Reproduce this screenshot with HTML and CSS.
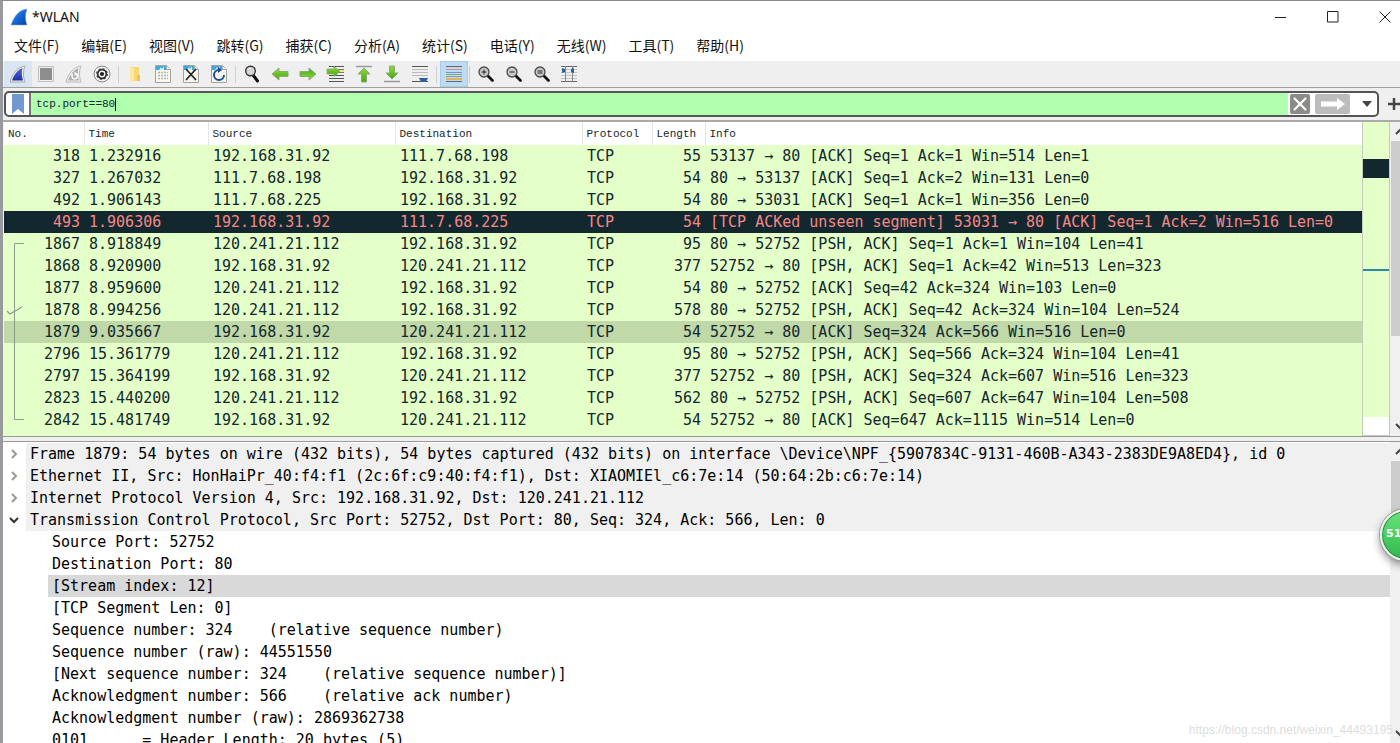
FILE: index.html
```html
<!DOCTYPE html>
<html lang="zh-CN">
<head>
<meta charset="utf-8">
<title>*WLAN</title>
<link rel="stylesheet" href="styles.css">
</head>
<body>
<svg class="defs" aria-hidden="true">
  <defs>
    <linearGradient id="blueFin" x1="0" y1="0" x2="1" y2="1"><stop offset="0" stop-color="#49a2ef"/><stop offset="0.5" stop-color="#1568d8"/><stop offset="1" stop-color="#0a3f9e"/></linearGradient>
    <linearGradient id="darkFin" x1="0" y1="0" x2="0" y2="1"><stop offset="0" stop-color="#5068d8"/><stop offset="1" stop-color="#1c2fa8"/></linearGradient>
    <linearGradient id="green" x1="0" y1="0" x2="0" y2="1"><stop offset="0" stop-color="#8bdc3c"/><stop offset="1" stop-color="#45a80c"/></linearGradient>
    <symbol id="page" viewBox="0 0 18 20"><path d="M1.500 1.500h11l4 4v13h-15z" fill="#f6f6f0" stroke="#a3a59b"/><path d="M2 2h10l4 4H2z" fill="#40a6dd"/><path d="M5 6l2-3 1 2 2-3v4z" fill="#d8effa"/><path d="M12.500 1.500v4h4z" fill="#fff" stroke="#a3a59b" stroke-width=".7"/></symbol>
    <symbol id="lens" viewBox="0 0 18 18"><path d="M11 11l4.500 4.500" stroke="#111" stroke-width="2.800" stroke-linecap="round"/><circle cx="7" cy="7" r="5" fill="#c9c9c9" stroke="#4a4a4a" stroke-width="1.300"/></symbol>
    <symbol id="arrow" viewBox="0 0 18 14"><path d="M1 7l7-6v3.500h9v5H8V13z" fill="url(#green)" stroke="#90a77e" stroke-width="1"/></symbol>
  </defs>
</svg>
<div class="window">
  <header class="titlebar">
    <svg class="logo" viewBox="0 0 18 18"><path d="M1 17C4 9 8 2 17 1c-2 5-2 11 0 16z" fill="url(#blueFin)" stroke="#7fa7d6" stroke-width=".6"/></svg>
    <h1 class="title">*WLAN</h1>
    <div class="window-buttons">
      <button aria-label="Minimize"><svg viewBox="0 0 12 12"><path d="M0 6.500h11" stroke="#222"/></svg></button>
      <button aria-label="Maximize"><svg viewBox="0 0 12 12"><path d="M.5 .5h10.500v10.500H.5z" fill="none" stroke="#222"/></svg></button>
      <button aria-label="Close"><svg viewBox="0 0 12 12"><path d="M.5 .5l11 11M11.500 .5l-11 11" stroke="#222"/></svg></button>
    </div>
  </header>
  <nav class="menu">
    <button>文件(F)</button><button>编辑(E)</button><button>视图(V)</button><button>跳转(G)</button><button>捕获(C)</button><button>分析(A)</button><button>统计(S)</button><button>电话(Y)</button><button>无线(W)</button><button>工具(T)</button><button>帮助(H)</button>
  </nav>
  <div class="toolbar" role="toolbar">
    <button class="start" aria-label="Start"><svg viewBox="0 0 20 20"><path d="M2 18C4 10 9 3 17 2c-2 5-2 11 0 16z" fill="#eee" stroke="#aaa"/><path d="M4 16.500C6 11 9 6 14.500 4c-1 4-1 8 .5 12.500z" fill="url(#darkFin)"/></svg></button>
    <button aria-label="Stop"><svg viewBox="0 0 20 20"><path d="M2.500 2.500h15v15h-15z" fill="#eee" stroke="#c0c0c0"/><path d="M4 4h12v12H4z" fill="#8d8d8d"/></svg></button>
    <button aria-label="Restart"><svg viewBox="0 0 20 20"><path d="M2 18C4 10 9 3 17 2c-2 5-2 11 0 16z" fill="#eee" stroke="#bbb"/><path d="M4 16.500C6 11 9 6 14.500 4c-1 4-1 8 .5 12.500z" fill="#b0b0b0"/><path d="M8 9.500v2a2.800 2.800 0 1 0 5-1" fill="none" stroke="#fff" stroke-width="1.500"/><path d="M10.500 7.500l3.500 3-3.500 1z" fill="#fff"/></svg></button>
    <button aria-label="Options"><svg viewBox="0 0 20 20"><circle cx="10" cy="10" r="8" fill="#f4f4f4" stroke="#888"/><circle cx="10" cy="10" r="4.300" fill="#f4f4f4" stroke="#333" stroke-width="1.700"/><circle cx="10" cy="10" r="5.300" fill="none" stroke="#333" stroke-width="1.200" stroke-dasharray="2.100 2.060"/><circle cx="10" cy="10" r="2.100" fill="#222"/></svg></button>
    <span class="sep"></span>
    <button aria-label="Open"><svg viewBox="0 0 20 20"><path d="M5 3h9v14H5z" fill="#f8d775"/><path d="M5 3l4 1v14l-4-1z" fill="#fbe7a5"/><path d="M12 11h3v6h-3z" fill="#efc35a"/></svg></button>
    <button aria-label="Save"><svg viewBox="0 0 20 20"><use href="#page" x="1" width="18" height="20"/><path d="M5 8.500h10M5 11.500h10M5 14.500h10" stroke="#b3b6ac" stroke-width="1.500" stroke-dasharray="2 1"/></svg></button>
    <button aria-label="Close file"><svg viewBox="0 0 20 20"><use href="#page" x="1" width="18" height="20"/><path d="M5 5l10 11M15 5L5 16" stroke="#222" stroke-width="1.700"/></svg></button>
    <button aria-label="Reload"><svg viewBox="0 0 20 20"><use href="#page" x="1" width="18" height="20"/><path d="M10 6a5 5 0 1 0 5 5" fill="none" stroke="#244c8c" stroke-width="2"/><path d="M9 3l4 3-4 3z" fill="#244c8c"/></svg></button>
    <span class="sep"></span>
    <button aria-label="Find"><svg viewBox="0 0 20 20"><path d="M11 11l4.500 6" stroke="#111" stroke-width="3" stroke-linecap="round"/><circle cx="8.500" cy="7" r="4.800" fill="#d5d5d5" stroke="#333" stroke-width="1.400"/><path d="M6 6q1-2 3-2" stroke="#fff" fill="none"/></svg></button>
    <button aria-label="Back"><svg viewBox="0 0 20 20"><use href="#arrow" x="1" y="3" width="18" height="14"/></svg></button>
    <button aria-label="Forward"><svg viewBox="0 0 20 20"><g transform="rotate(180 10 10)"><use href="#arrow" x="1" y="3" width="18" height="14"/></g></svg></button>
    <button aria-label="Go to packet"><svg viewBox="0 0 20 20"><path d="M3 2.500h15M3 11.500h15M3 14.500h15M3 17.500h15" stroke="#555"/><path d="M12 5h6v4h-6z" fill="#f4e36d"/><path d="M12 5.500h6M12 8.500h6" stroke="#777"/><path d="M14 7.500L8 2.500V5H1v5h7v2.500z" fill="url(#green)" stroke="#8ba577" stroke-width=".8"/></svg></button>
    <button aria-label="First packet"><svg viewBox="0 0 20 20"><path d="M2 2.500h16" stroke="#999" stroke-width="1.500"/><path d="M10 4l6 6h-3.500v8h-5v-8H4z" fill="url(#green)" stroke="#90a77e"/></svg></button>
    <button aria-label="Last packet"><svg viewBox="0 0 20 20"><path d="M2 17.500h16" stroke="#999" stroke-width="1.500"/><path d="M10 15l6-6h-3.500V2h-5v7H4z" fill="url(#green)" stroke="#90a77e"/></svg></button>
    <button aria-label="Auto scroll"><svg viewBox="0 0 20 20"><path d="M2 2.500h16M2 17.500h16" stroke="#555"/><path d="M2 5.500h16M2 8.500h16M2 11.500h16" stroke="#bbb"/><path d="M9 14h9l-2 4h-5z" fill="#315da8"/></svg></button>
    <span class="sep wide"></span>
    <button class="checked" aria-label="Colorize"><svg viewBox="0 0 20 20"><path d="M2 2.500h16M2 17.500h16" stroke="#666"/><path d="M2 5.500h16" stroke="#dc8988"/><path d="M2 8.500h16" stroke="#7d91ce"/><path d="M2 10.500h16" stroke="#78b667"/><path d="M2 12.500h16" stroke="#a48bb9"/><path d="M2 15h16" stroke="#d6b958" stroke-width="2"/></svg></button>
    <span class="sep tight"></span>
    <button aria-label="Zoom in"><svg viewBox="0 0 20 20"><use href="#lens" x="2" y="1" width="18" height="18"/><path d="M6.500 8h5M9 5.500v5" stroke="#222"/></svg></button>
    <button aria-label="Zoom out"><svg viewBox="0 0 20 20"><use href="#lens" x="2" y="1" width="18" height="18"/><path d="M6.500 8h5" stroke="#222"/></svg></button>
    <button aria-label="Normal size"><svg viewBox="0 0 20 20"><use href="#lens" x="2" y="1" width="18" height="18"/><path d="M6.500 7h5M6.500 9h5" stroke="#222"/></svg></button>
    <button aria-label="Resize columns"><svg viewBox="0 0 20 20"><path d="M2 2.500h16M2 17.500h16" stroke="#666"/><path d="M2 5.500h16M2 8.500h16M2 11.500h16M2 14.500h16" stroke="#c4c4c4"/><path d="M6.500 2v16M13.500 2v16" stroke="#888"/><path d="M3 4l3 1v3l-3 1zM15 4l-3 1v3l3 1z" fill="#315d9a"/></svg></button>
  </div>
  <div class="filterbar">
    <div class="filter">
      <button class="bookmark" aria-label="Bookmarks"><svg viewBox="0 0 12 20"><path d="M0 0h12v20l-6-5-6 5z" fill="#6f9ad0"/></svg></button>
      <div class="field-wrap"><input type="text" value="tcp.port==80" aria-label="Display filter"></div>
      <button class="clear" aria-label="Clear"><svg viewBox="0 0 20 20"><path d="M4 4l12 12M16 4L4 16" stroke="#fff" stroke-width="2.200"/></svg></button>
      <button class="apply" aria-label="Apply"><svg viewBox="0 0 35 20"><path d="M6 7.500h16V4l8 6-8 6v-3.500H6z" fill="#fff"/></svg></button>
      <button class="drop" aria-label="Recent filters"><svg viewBox="0 0 10 6"><path d="M0 0h10L5 6z" fill="#444"/></svg></button>
    </div>
    <button class="add" aria-label="Add filter button"><svg viewBox="0 0 12 12"><path d="M6 0v12M0 6h12" stroke="#444" stroke-width="2.500"/></svg></button>
  </div>
  <section class="packets">
    <div class="list">
      <table>
        <colgroup><col class="c-no"><col class="c-time"><col class="c-addr"><col class="c-addr"><col class="c-proto"><col class="c-len"><col></colgroup>
        <thead><tr><th>No.</th><th>Time</th><th>Source</th><th>Destination</th><th>Protocol</th><th>Length</th><th>Info</th></tr></thead>
        <tbody>
          <tr><td>318</td><td>1.232916</td><td>192.168.31.92</td><td>111.7.68.198</td><td>TCP</td><td>55</td><td>53137 → 80 [ACK] Seq=1 Ack=1 Win=514 Len=1</td></tr>
          <tr><td>327</td><td>1.267032</td><td>111.7.68.198</td><td>192.168.31.92</td><td>TCP</td><td>54</td><td>80 → 53137 [ACK] Seq=1 Ack=2 Win=131 Len=0</td></tr>
          <tr><td>492</td><td>1.906143</td><td>111.7.68.225</td><td>192.168.31.92</td><td>TCP</td><td>54</td><td>80 → 53031 [ACK] Seq=1 Ack=1 Win=356 Len=0</td></tr>
          <tr class="bad"><td>493</td><td>1.906306</td><td>192.168.31.92</td><td>111.7.68.225</td><td>TCP</td><td>54</td><td>[TCP ACKed unseen segment] 53031 → 80 [ACK] Seq=1 Ack=2 Win=516 Len=0</td></tr>
          <tr><td>1867</td><td>8.918849</td><td>120.241.21.112</td><td>192.168.31.92</td><td>TCP</td><td>95</td><td>80 → 52752 [PSH, ACK] Seq=1 Ack=1 Win=104 Len=41</td></tr>
          <tr><td>1868</td><td>8.920900</td><td>192.168.31.92</td><td>120.241.21.112</td><td>TCP</td><td>377</td><td>52752 → 80 [PSH, ACK] Seq=1 Ack=42 Win=513 Len=323</td></tr>
          <tr><td>1877</td><td>8.959600</td><td>120.241.21.112</td><td>192.168.31.92</td><td>TCP</td><td>54</td><td>80 → 52752 [ACK] Seq=42 Ack=324 Win=103 Len=0</td></tr>
          <tr><td>1878</td><td>8.994256</td><td>120.241.21.112</td><td>192.168.31.92</td><td>TCP</td><td>578</td><td>80 → 52752 [PSH, ACK] Seq=42 Ack=324 Win=104 Len=524</td></tr>
          <tr class="selected"><td>1879</td><td>9.035667</td><td>192.168.31.92</td><td>120.241.21.112</td><td>TCP</td><td>54</td><td>52752 → 80 [ACK] Seq=324 Ack=566 Win=516 Len=0</td></tr>
          <tr><td>2796</td><td>15.361779</td><td>120.241.21.112</td><td>192.168.31.92</td><td>TCP</td><td>95</td><td>80 → 52752 [PSH, ACK] Seq=566 Ack=324 Win=104 Len=41</td></tr>
          <tr><td>2797</td><td>15.364199</td><td>192.168.31.92</td><td>120.241.21.112</td><td>TCP</td><td>377</td><td>52752 → 80 [PSH, ACK] Seq=324 Ack=607 Win=516 Len=323</td></tr>
          <tr><td>2823</td><td>15.440200</td><td>120.241.21.112</td><td>192.168.31.92</td><td>TCP</td><td>562</td><td>80 → 52752 [PSH, ACK] Seq=607 Ack=647 Win=104 Len=508</td></tr>
          <tr><td>2842</td><td>15.481749</td><td>192.168.31.92</td><td>120.241.21.112</td><td>TCP</td><td>54</td><td>52752 → 80 [ACK] Seq=647 Ack=1115 Win=514 Len=0</td></tr>
        </tbody>
      </table>
      <svg class="stream" viewBox="0 0 20 180"><path d="M20 .5h-9.500v176H20" fill="none" stroke="#8c9a8c"/><path d="M3 68l3 3 12-7" fill="none" stroke="#8c9a8c" stroke-width="1.200"/></svg>
    </div>
    <div class="minimap"><i class="gap"></i><i class="dark"></i><i class="mid"></i><i class="line"></i><i class="rest"></i><i class="blank"></i></div>
    <div class="scroll">
      <svg viewBox="0 0 9 19"><path d="M5 12l5-5" stroke="#444" stroke-width="2"/></svg>
      <i class="thumb long"></i>
      <svg viewBox="0 0 9 19"><path d="M5 7l5 5" stroke="#444" stroke-width="2"/></svg>
    </div>
  </section>
  <section class="details">
    <ul class="tree">
      <li class="proto"><svg viewBox="0 0 10 10"><path d="M3 1l4 4-4 4" stroke="#999"/></svg><span>Frame 1879: 54 bytes on wire (432 bits), 54 bytes captured (432 bits) on interface \Device\NPF_{5907834C-9131-460B-A343-2383DE9A8ED4}, id 0</span></li>
      <li class="proto"><svg viewBox="0 0 10 10"><path d="M3 1l4 4-4 4" stroke="#999"/></svg><span>Ethernet II, Src: HonHaiPr_40:f4:f1 (2c:6f:c9:40:f4:f1), Dst: XIAOMIEl_c6:7e:14 (50:64:2b:c6:7e:14)</span></li>
      <li class="proto"><svg viewBox="0 0 10 10"><path d="M3 1l4 4-4 4" stroke="#999"/></svg><span>Internet Protocol Version 4, Src: 192.168.31.92, Dst: 120.241.21.112</span></li>
      <li class="proto"><svg viewBox="0 0 10 10"><path d="M1 3l4 4 4-4" stroke="#333"/></svg><span>Transmission Control Protocol, Src Port: 52752, Dst Port: 80, Seq: 324, Ack: 566, Len: 0</span></li>
      <li class="field"><span>Source Port: 52752</span></li>
      <li class="field"><span>Destination Port: 80</span></li>
      <li class="field current"><span>[Stream index: 12]</span></li>
      <li class="field"><span>[TCP Segment Len: 0]</span></li>
      <li class="field"><span>Sequence number: 324    (relative sequence number)</span></li>
      <li class="field"><span>Sequence number (raw): 44551550</span></li>
      <li class="field"><span>[Next sequence number: 324    (relative sequence number)]</span></li>
      <li class="field"><span>Acknowledgment number: 566    (relative ack number)</span></li>
      <li class="field"><span>Acknowledgment number (raw): 2869362738</span></li>
      <li class="field"><span>0101      = Header Length: 20 bytes (5)</span></li>
    </ul>
    <div class="scroll">
      <svg viewBox="0 0 9 19"><path d="M5 12l5-5" stroke="#444" stroke-width="2"/></svg>
      <i class="thumb short"></i>
      <svg viewBox="0 0 9 19"><path d="M5 7l5 5" stroke="#444" stroke-width="2"/></svg>
    </div>
    <div class="badge">51</div>
    <div class="watermark">https://blog.csdn.net/weixin_44493195</div>
  </section>
</div>
</body>
</html>
```
FILE: styles.css
```css
* { box-sizing: border-box; }
body { margin: 0; font-family: "Noto Sans", "Noto Sans CJK SC", sans-serif; color: #111; overflow: hidden; }
button { border: 0; padding: 0; margin: 0; background: none; font: inherit; color: inherit; display: flex; align-items: center; justify-content: center; flex: none; }
svg { display: block; flex: none; }
.defs { position: absolute; width: 0; height: 0; }
.window { height: 100vh; display: flex; flex-direction: column; background: #fff; border-top: 1px solid #888; border-left: 3px solid #989a9e; overflow: hidden; }

.titlebar { display: flex; align-items: center; height: 31px; flex: none; padding: 0 9px 0 7px; }
.logo { width: 18px; height: 18px; }
.title { flex: 1; margin: 0; padding-left: 4px; font-size: 14px; line-height: 20px; font-weight: 400; }
.window-buttons { display: flex; gap: 40px; }
.window-buttons button, .window-buttons svg { width: 12px; height: 12px; }

.menu { display: flex; gap: 22px; height: 29px; flex: none; padding: 0 0 4px 11px; font-family: "Noto Sans CJK SC", sans-serif; font-size: 14px; line-height: 20px; }

.toolbar { display: flex; align-items: center; height: 27px; flex: none; background: #efefef; border-bottom: 1px solid #a0a0a0; padding-left: 1px; }
.toolbar button { width: 28px; height: 26px; }
.toolbar svg { width: 20px; height: 20px; }
.toolbar .start { background: #d9e6f2; }
.toolbar .checked { background: #bddcf4; border: 1px solid #a5cdee; }
.sep { width: 1px; height: 17px; margin: 0 2px; background: #cfcfcf; }
.sep.wide { margin: 0 3px 0 2px; }
.sep.tight { margin: 0 1px; }

.filterbar { display: flex; align-items: center; gap: 8px; height: 34px; flex: none; background: #efefef; border-bottom: 2px solid #aaa; padding-left: 1px; }
.filter { flex: 1; display: flex; align-items: center; height: 26px; background: #fff; border: 2px solid #555; border-radius: 5px; overflow: hidden; }
.bookmark { width: 25px; height: 22px; border-right: 2px solid #777; }
.bookmark svg { width: 12px; height: 20px; }
.field-wrap { position: relative; flex: 1; min-width: 0; display: flex; align-self: stretch; font: 11px "Liberation Mono", monospace; }
.field-wrap::after { content: ""; position: absolute; left: calc(5px + 12ch); top: 5px; width: 1px; height: 13px; background: #000; }
.field-wrap input { flex: 1; min-width: 0; border: 0; outline: 0; padding: 0 5px; background: #afffaf; font: inherit; color: #123; }
.clear { width: 20px; height: 20px; margin-left: 2px; background: #8b8c87; border-radius: 2px; }
.clear svg { width: 20px; height: 20px; }
.apply { width: 35px; height: 20px; margin-left: 5px; background: #bcbcbc; border-radius: 2px; }
.apply svg { width: 35px; height: 20px; }
.drop { width: 25px; height: 20px; margin-left: 2px; padding-left: 4px; }
.drop svg { width: 10px; height: 6px; }
.add { width: 13px; height: 20px; }
.add svg { width: 12px; height: 12px; }

.packets { flex: 315 1 0; min-height: 0; display: flex; border-bottom: 1px solid #999; }
.list { position: relative; flex: 1; min-width: 0; overflow: hidden; padding-left: 1px; background: #e4ffc7; }
table { width: 100%; table-layout: fixed; border-collapse: collapse; font: 15px/22px "DejaVu Sans Mono", monospace; color: #12272e; }
.c-no { width: 80px; }
.c-time { width: 124px; }
.c-addr { width: 187px; }
.c-proto { width: 70px; }
.c-len { width: 53px; }
th { height: 23px; padding: 0 4px; background: #fff; border-right: 1px solid #e5e5e5; text-align: left; font-family: "Liberation Mono", monospace; font-size: 11px; font-weight: 400; }
th:last-child { border-right: 0; }
td { height: 22px; padding: 0 4px 0 5px; white-space: nowrap; }
td:nth-child(1), td:nth-child(6) { text-align: right; }
.bad { background: #12272e; color: #f78787; }
.selected { background: #c1d8a8; }
.stream { position: absolute; left: 1px; top: 121px; width: 20px; height: 180px; }
.minimap { width: 28px; flex: none; display: flex; flex-direction: column; border: solid #c4ccc0; border-width: 0 1px 1px; background: #e4ffc7; }
.gap { flex: 37 1 0; }
.dark { flex: 19 1 0; background: #12272e; }
.mid { flex: 91 1 0; }
.line { height: 2px; background: #2c8ba8; }
.rest { flex: 145 1 0; }
.blank { flex: 18 1 0; background: #fff; }
.scroll { width: 10px; flex: none; display: flex; flex-direction: column; justify-content: space-between; background: #f0f0f0; }
.scroll svg { width: 9px; height: 19px; margin-left: 1px; }
.thumb { margin-left: 1px; background: #cdcdcd; }
.long { flex: 195 1 0; margin-bottom: 81px; }
.short { flex: 53 1 0; }
.short + svg { margin-top: 210px; }

.details { position: relative; flex: 302 1 0; min-height: 0; margin-top: 4px; display: flex; border-top: 1px solid #999; box-shadow: 0 -4px #f0f0f0; overflow: hidden; }
.tree { flex: 1; min-width: 0; overflow: hidden; margin: 0; padding: 1px 0 0; list-style: none; font: 15px/22px "DejaVu Sans Mono", monospace; color: #000; }
.tree li { display: flex; align-items: center; height: 22px; }
.tree span { flex: 1; padding-left: 4px; white-space: pre; }
.tree svg { width: 10px; height: 10px; margin: 0 7px 0 6px; fill: none; stroke-width: 2; }
.proto span { background: #f0f0f0; }
.field { padding-left: 45px; }
.current span { background: #d9d9d9; }
.badge { position: absolute; right: -32px; top: 67px; width: 52px; height: 52px; padding-left: 4px; border: 2px solid #e8f5e8; border-radius: 50%; background: linear-gradient(#6be27a, #30b94c); box-shadow: 0 0 0 1px #999, 0 4px 8px #888, inset 0 0 0 1px #258d44; color: #fff; font: bold 11px/46px "DejaVu Sans", sans-serif; }
.watermark { position: absolute; right: 7px; bottom: 5px; color: #dedede; font: 12px/16px "Liberation Sans", sans-serif; }
```
